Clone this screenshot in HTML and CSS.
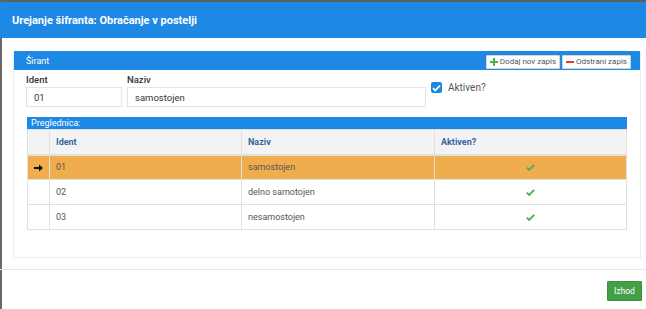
FILE: index.html
```html
<!DOCTYPE html>
<html>
<head>
<meta charset="utf-8">
<link rel="stylesheet" href="styles.css">
</head>
<body>
<div class="modal">
  <div class="modal-header">Urejanje šifranta: Obračanje v postelji</div>
  <div class="modal-body">
    <div class="panel">
      <div class="panel-head">
        <span class="panel-title">Širant</span>
        <div class="tools">
          <button class="tbtn"><svg width="8" height="8" viewBox="0 0 8 8"><path d="M3 0h2v3h3v2H5v3H3V5H0V3h3z" fill="#4caf50"/></svg>Dodaj nov zapis</button>
          <button class="tbtn"><svg width="8" height="8" viewBox="0 0 8 8"><rect x="0" y="3" width="8" height="2" fill="#e53935"/></svg>Odstrani zapis</button>
        </div>
      </div>
      <div class="form">
        <div class="field f-ident">
          <label class="lbl">Ident</label>
          <div class="input">01</div>
        </div>
        <div class="field f-naziv">
          <label class="lbl">Naziv</label>
          <div class="input">samostojen</div>
        </div>
        <div class="check">
          <span class="box"><svg width="9" height="8" viewBox="0 0 9 8"><path d="M1 4.2l2.3 2.3L8 1.5" stroke="#fff" stroke-width="1.8" fill="none"/></svg></span>
          <span>Aktiven?</span>
        </div>
      </div>
      <div class="grid">
        <div class="grid-title">Preglednica:</div>
        <table>
          <thead>
            <tr><th class="c0"></th><th class="c1">Ident</th><th class="c2">Naziv</th><th class="c3">Aktiven?</th></tr>
          </thead>
          <tbody>
            <tr class="sel"><td class="c0"><svg width="9" height="8" viewBox="0 0 9 8"><path d="M0 3h5V0.5L9 4 5 7.5V5H0z" fill="#111"/></svg></td><td>01</td><td>samostojen</td><td class="ok"><svg width="9" height="7" viewBox="0 0 9 7"><path d="M0.8 3.6l2.3 2.3L8.2 0.9" stroke="#4caf50" stroke-width="1.9" fill="none"/></svg></td></tr>
            <tr><td class="c0"></td><td>02</td><td>delno samotojen</td><td class="ok"><svg width="9" height="7" viewBox="0 0 9 7"><path d="M0.8 3.6l2.3 2.3L8.2 0.9" stroke="#4caf50" stroke-width="1.9" fill="none"/></svg></td></tr>
            <tr><td class="c0"></td><td>03</td><td>nesamostojen</td><td class="ok"><svg width="9" height="7" viewBox="0 0 9 7"><path d="M0.8 3.6l2.3 2.3L8.2 0.9" stroke="#4caf50" stroke-width="1.9" fill="none"/></svg></td></tr>
          </tbody>
        </table>
      </div>
    </div>
  </div>
  <div class="modal-footer">
    <button class="exit">Izhod</button>
  </div>
</div>
</body>
</html>
```

FILE: styles.css
```css
* { box-sizing: border-box; }
html, body { margin: 0; padding: 0; background: #fff; }
body { font-family: Roboto, "Noto Sans", Arial, sans-serif; color: #333; }
.modal {
  width: 646px;
  height: 309px;
  border-top: 2px solid #5e5e5e;
  border-left: 2px solid #6a6a6a;
  background: #fff;
}
.modal-header {
  height: 36px;
  background: #1e88e5;
  color: #fff;
  font-size: 11px;
  font-weight: 700;
  display: flex;
  align-items: center;
  margin-left: -2px;
  padding-left: 12px;
}
.modal-body {
  padding: 13px 3px 0 11px;
}
.panel {
  width: 628px;
  height: 207px;
  border: 1px solid #ececec;
  border-top: none;
}
.panel-head {
  height: 19px;
  background: #1e88e5;
  display: flex;
  align-items: center;
  justify-content: space-between;
  padding: 0 9px 0 12px;
}
.panel-title { color: #fff; font-size: 9px; }
.tools { display: flex; gap: 2px; }
.tbtn {
  height: 14px;
  background: #fff;
  border: 1px solid #d6d6d6;
  border-radius: 1px;
  font-family: inherit;
  font-size: 8px;
  color: #555;
  padding: 0 3px 0 3px;
  display: flex;
  align-items: center;
  gap: 2px;
  margin-top: 2px;
}
.form {
  display: flex;
  padding: 4px 0 0 12px;
  gap: 5px;
}
.lbl { display: block; font-size: 9.5px; font-weight: 500; color: #333; height: 13px; line-height: 12px; }
.input {
  height: 20px;
  border: 1px solid #e3e3e3;
  font-size: 9.5px;
  color: #333;
  display: flex;
  align-items: center;
  padding-left: 7px;
}
.f-ident .input { width: 96px; }
.f-naziv .input { width: 299px; }
.check {
  display: flex;
  align-items: flex-start;
  gap: 6px;
  font-size: 10px;
  color: #555;
  padding-top: 8px;
}
.box {
  width: 11px;
  height: 11px;
  background: #1e88e5;
  border-radius: 2px;
  display: flex;
  align-items: center;
  justify-content: center;
}
.grid {
  margin: 10px 13px 0 13px;
}
.grid-title {
  height: 12px;
  background: #1e88e5;
  color: #fff;
  font-size: 9px;
  line-height: 12px;
  padding-left: 4px;
}
table {
  width: 600px;
  border-collapse: collapse;
  font-size: 9px;
  table-layout: fixed;
}
th, td {
  border: 1px solid #e0e0e0;
  text-align: left;
  padding: 0 0 0 6px;
  height: 25px;
}
th {
  background: #f3f3f3;
  color: #33679f;
  font-weight: 700;
  border-bottom: 2px solid #e0e0e0;
}
th.c0, td.c0 { width: 22px; padding: 0; text-align: center; }
th.c1 { width: 192px; }
th.c2 { width: 193px; }
td { color: #555; }
tr.sel td { background: #f0ad4e; }
td.ok { text-align: center; padding: 0; }
td svg { display: inline-block; vertical-align: middle; }
.modal-footer {
  margin-top: 11px;
  margin-left: -2px;
  border-top: 1px solid #e8e8e8;
  height: 40px;
  display: flex;
  justify-content: flex-end;
  align-items: flex-start;
  padding: 11px 4px 0 0;
}
.exit {
  width: 35px;
  height: 20px;
  background: #43a047;
  border: 1px solid #3b9140;
  border-radius: 1px;
  color: #fff;
  font-family: inherit;
  font-size: 8.5px;
  padding: 0;
}
```
